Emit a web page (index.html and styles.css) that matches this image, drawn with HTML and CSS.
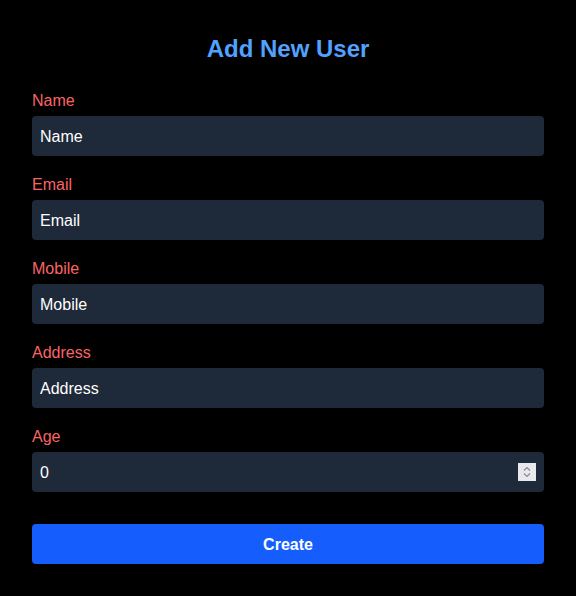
FILE: index.html
```html
<!DOCTYPE html>
<html lang="en">
<head>
<meta charset="utf-8">
<title>Add New User</title>
<link rel="stylesheet" href="styles.css">
</head>
<body>
<form class="card">
  <h1 class="title">Add New User</h1>
  <div class="field">
    <label class="label" for="name">Name</label>
    <input class="input" id="name" type="text" placeholder="Name">
  </div>
  <div class="field">
    <label class="label" for="email">Email</label>
    <input class="input" id="email" type="text" placeholder="Email">
  </div>
  <div class="field">
    <label class="label" for="mobile">Mobile</label>
    <input class="input" id="mobile" type="text" placeholder="Mobile">
  </div>
  <div class="field">
    <label class="label" for="address">Address</label>
    <input class="input" id="address" type="text" placeholder="Address">
  </div>
  <div class="field">
    <label class="label" for="age">Age</label>
    <div class="number-wrap">
      <input class="input" id="age" type="text" value="0">
      <span class="spinner" aria-hidden="true">
        <svg width="18" height="18" viewBox="0 0 18 18">
          <path d="M6 7.5 L9 4.5 L12 7.5" fill="none" stroke="#8a8a92" stroke-width="1.2"/>
          <path d="M6 10.5 L9 13.5 L12 10.5" fill="none" stroke="#8a8a92" stroke-width="1.2"/>
        </svg>
      </span>
    </div>
  </div>
  <button class="button" type="button">Create</button>
</form>
</body>
</html>
```

FILE: styles.css
```css
* { box-sizing: border-box; }
html, body {
  margin: 0;
  background: #000;
  font-family: "Liberation Sans", Arial, sans-serif;
}
.card {
  width: 576px;
  min-height: 596px;
  padding: 32px;
  display: flex;
  flex-direction: column;
  background: #000;
  border-radius: 8px;
}
.title {
  margin: 0 0 22px;
  text-align: center;
  font-size: 24px;
  line-height: 34px;
  font-weight: 700;
  color: #51a2ff;
}
.field {
  display: flex;
  flex-direction: column;
  margin-bottom: 16px;
}
.label {
  font-size: 16px;
  line-height: 26px;
  color: #fb6466;
  margin-bottom: 2px;
}
.input {
  width: 100%;
  height: 40px;
  padding: 2px 8px 0;
  border: none;
  border-radius: 4px;
  background: #1e2939;
  color: #fff;
  font-family: inherit;
  font-size: 16px;
  outline: none;
}
.input::placeholder { color: #fff; opacity: 1; }
.number-wrap { position: relative; }
.spinner {
  position: absolute;
  right: 8px;
  top: 11px;
  width: 18px;
  height: 18px;
  background: #e9e9ed;
  display: block;
}
.spinner svg { display: block; }
.button {
  margin-top: 16px;
  height: 40px;
  padding-top: 2px;
  border: none;
  border-radius: 4px;
  background: #155dfc;
  color: #fff;
  font-family: inherit;
  font-size: 16px;
  font-weight: 700;
}
```
